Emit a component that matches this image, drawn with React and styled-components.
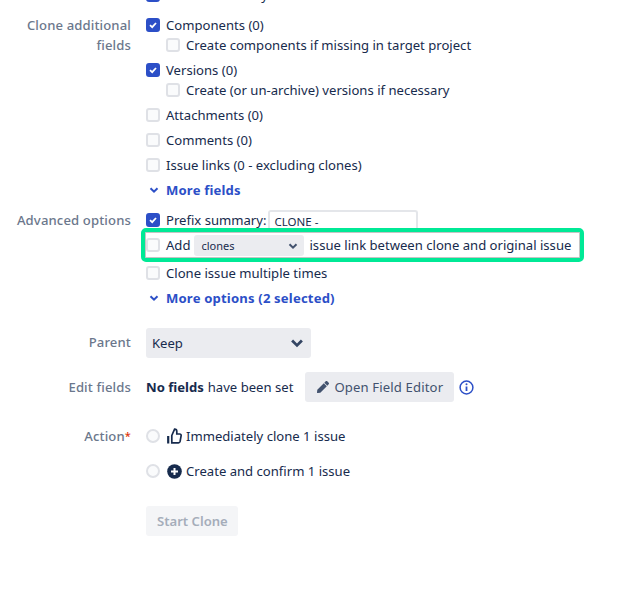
import React from 'react';
import styled, { createGlobalStyle } from 'styled-components';
import { FaPen } from 'react-icons/fa';

const GlobalStyle = createGlobalStyle`
  html, body {
    margin: 0;
    height: 100%;
    overflow: hidden;
    background: #fff;
  }
  body {
    font-family: "Noto Sans", "Open Sans", sans-serif;
    font-size: 13.1px;
    color: #172b4d;
  }
`;

const Form = styled.div`
  width: 618px;
  height: 607px;
  overflow: hidden;
  display: flex;
  flex-direction: column;
`;

const Section = styled.div`
  display: grid;
  grid-template-columns: 131px 1fr;
  column-gap: 15px;
  margin-top: ${(p) => p.$top || 0}px;
`;

const Label = styled.div`
  text-align: right;
  color: #6b778c;
  font-weight: 500;
  line-height: 20px;
  letter-spacing: 0.13px;
  padding-top: ${(p) => p.$pad || 0}px;
`;

const Required = styled.span`
  color: #de350b;
  font-size: 11px;
  vertical-align: 1px;
`;

const Stack = styled.div`
  display: flex;
  flex-direction: column;
  gap: ${(p) => p.$gap ?? 5}px;
  min-width: 0;
`;

const Row = styled.div`
  display: flex;
  align-items: center;
  height: ${(p) => p.$h || 20}px;
  white-space: nowrap;
  position: relative;
`;

const SubRow = styled(Row)`
  padding-left: 20px;
  margin-top: -5px;
`;

const Box = styled.span`
  width: 14px;
  height: 14px;
  box-sizing: border-box;
  flex: none;
  margin-right: 6px;
  border-radius: 3px;
  border: 2px solid ${(p) => (p.$on ? '#2c4fc7' : '#dfe1e6')};
  background: ${(p) => (p.$on ? '#2c4fc7' : '#fafbfc')};
  display: flex;
  align-items: center;
  justify-content: center;
`;

const Check = () => (
  <svg width="10" height="10" viewBox="0 0 10 10">
    <path d="M2 5.2 L4.2 7.2 L8 3" fill="none" stroke="#fff" strokeWidth="1.8" />
  </svg>
);

const Chevron = ({ size = 10, color = '#2c4fc7', width = 2 }) => (
  <svg width={size} height={size} viewBox="0 0 10 10">
    <path d="M1.5 3.2 L5 6.7 L8.5 3.2" fill="none" stroke={color} strokeWidth={width} />
  </svg>
);

const MoreLink = styled.a`
  display: flex;
  align-items: center;
  color: #2c4fc7;
  font-weight: 700;
  letter-spacing: 0.17px;
  gap: 7px;
  padding-left: 3px;
`;

const PrefixInput = styled.div`
  align-self: flex-start;
  width: 150px;
  height: 19px;
  box-sizing: border-box;
  margin-left: 2px;
  padding-left: 4px;
  border: 2px solid #e4e6ea;
  border-bottom: none;
  border-radius: 3px 3px 0 0;
  font-size: 11.5px;
  line-height: 19px;
`;

const AddRow = styled(Row)`
  margin-bottom: 3px;
`;

const Highlight = styled.div`
  position: absolute;
  left: -5px;
  top: -7px;
  width: 443px;
  height: 34px;
  box-sizing: border-box;
  border: 4px solid #00e996;
  border-radius: 5px;
  box-shadow: inset 0 0 0 1px #c4c4c4;
  pointer-events: none;
`;

const InlineSelect = styled.div`
  width: 110px;
  height: 21px;
  margin: 0 5px 0 4px;
  padding: 1px 6px 0 7px;
  box-sizing: border-box;
  background: #ebecf0;
  border-radius: 3px;
  display: flex;
  align-items: center;
  justify-content: space-between;
  font-size: 11px;
`;

const ParentSelect = styled.div`
  width: 165px;
  height: 30px;
  box-sizing: border-box;
  padding: 0 7px 0 6px;
  background: #ebecf0;
  border-radius: 3px;
  display: flex;
  align-items: center;
  justify-content: space-between;
`;

const Button = styled.div`
  height: 30px;
  box-sizing: border-box;
  padding: 0 ${(p) => (p.$disabled ? '10px 0 11px' : '11px 0 12px')};
  border-radius: 3px;
  background: ${(p) => (p.$disabled ? '#f4f5f7' : '#ebecf0')};
  color: ${(p) => (p.$disabled ? '#a5adba' : '#42526e')};
  font-weight: ${(p) => (p.$disabled ? 600 : 400)};
  letter-spacing: ${(p) => (p.$disabled ? 0 : 0.15)}px;
  display: inline-flex;
  align-items: center;
  gap: 5px;
`;

const Radio = styled.span`
  width: 14px;
  height: 14px;
  box-sizing: border-box;
  flex: none;
  margin-right: 7px;
  border-radius: 50%;
  border: 2px solid #dfe1e6;
  background: #fafbfc;
`;

const IconSlot = styled.span`
  display: inline-flex;
  margin-right: 4px;
`;

const ThumbIcon = () => (
  <svg width="15" height="16" viewBox="0 0 15 16">
    <path d="M1.2 8v7.5" fill="none" stroke="#172b4d" strokeWidth="2.2" />
    <path d="M4.8 7.5 7.6 1.2c1.6 0 2.2 1 2.2 2.2V6h2.9c1 0 1.6.8 1.4 1.8l-1 5.6c-.2.9-.8 1.4-1.6 1.4H4.8V7.5z" fill="none" stroke="#172b4d" strokeWidth="1.7" />
  </svg>
);

const PlusIcon = () => (
  <svg width="15" height="15" viewBox="0 0 15 15">
    <circle cx="7.5" cy="7.5" r="7.3" fill="#172b4d" />
    <path d="M7.5 4v7M4 7.5h7" stroke="#fff" strokeWidth="2" />
  </svg>
);

const InfoIcon = () => (
  <svg width="15" height="15" viewBox="0 0 15 15">
    <circle cx="7.5" cy="7.5" r="6.4" fill="none" stroke="#2c4fc7" strokeWidth="1.5" />
    <path d="M7.5 6.5v4.5" stroke="#2c4fc7" strokeWidth="1.8" />
    <circle cx="7.5" cy="4.3" r="1" fill="#2c4fc7" />
  </svg>
);

const InfoSlot = styled.span`
  display: inline-flex;
  margin-left: 5px;
`;

const Strong = styled.b`
  font-weight: 700;
  margin-right: 4px;
`;

const Note = styled.span`
  margin-right: 12px;
`;

const TopRow = styled(Row)`
  margin-top: -15px;
`;

const App = () => (
  <Form>
    <GlobalStyle />
    <Section>
      <Label />
      <TopRow>
        <Box $on><Check /></Box>
        Create summary
      </TopRow>
    </Section>
    <Section $top={10}>
      <Label>Clone additional fields</Label>
      <Stack>
        <Row><Box $on><Check /></Box>Components (0)</Row>
        <SubRow><Box />Create components if missing in target project</SubRow>
        <Row><Box $on><Check /></Box>Versions (0)</Row>
        <SubRow><Box />Create (or un-archive) versions if necessary</SubRow>
        <Row><Box />Attachments (0)</Row>
        <Row><Box />Comments (0)</Row>
        <Row><Box />Issue links (0 - excluding clones)</Row>
        <Row><MoreLink><Chevron />More fields</MoreLink></Row>
      </Stack>
    </Section>
    <Section $top={10}>
      <Label>Advanced options</Label>
      <Stack>
        <Row><Box $on><Check /></Box>Prefix summary:<PrefixInput>CLONE -</PrefixInput></Row>
        <AddRow>
          <Highlight />
          <Box />Add
          <InlineSelect>clones<Chevron color="#42526e" /></InlineSelect>
          issue link between clone and original issue
        </AddRow>
        <Row><Box />Clone issue multiple times</Row>
        <Row><MoreLink><Chevron />More options (2 selected)</MoreLink></Row>
      </Stack>
    </Section>
    <Section $top={20}>
      <Label $pad={4}>Parent</Label>
      <ParentSelect>Keep<Chevron size={14} color="#344563" width={2} /></ParentSelect>
    </Section>
    <Section $top={14}>
      <Label $pad={5}>Edit fields</Label>
      <Row $h={30}>
        <Strong>No fields</Strong>
        <Note>have been set</Note>
        <Button><FaPen size={12} />Open Field Editor</Button>
        <InfoSlot><InfoIcon /></InfoSlot>
      </Row>
    </Section>
    <Section $top={24}>
      <Label>Action<Required>*</Required></Label>
      <Stack $gap={15}>
        <Row><Radio /><IconSlot><ThumbIcon /></IconSlot>Immediately clone 1 issue</Row>
        <Row><Radio /><IconSlot><PlusIcon /></IconSlot>Create and confirm 1 issue</Row>
      </Stack>
    </Section>
    <Section $top={25}>
      <Label />
      <div><Button $disabled>Start Clone</Button></div>
    </Section>
  </Form>
);

export default App;
